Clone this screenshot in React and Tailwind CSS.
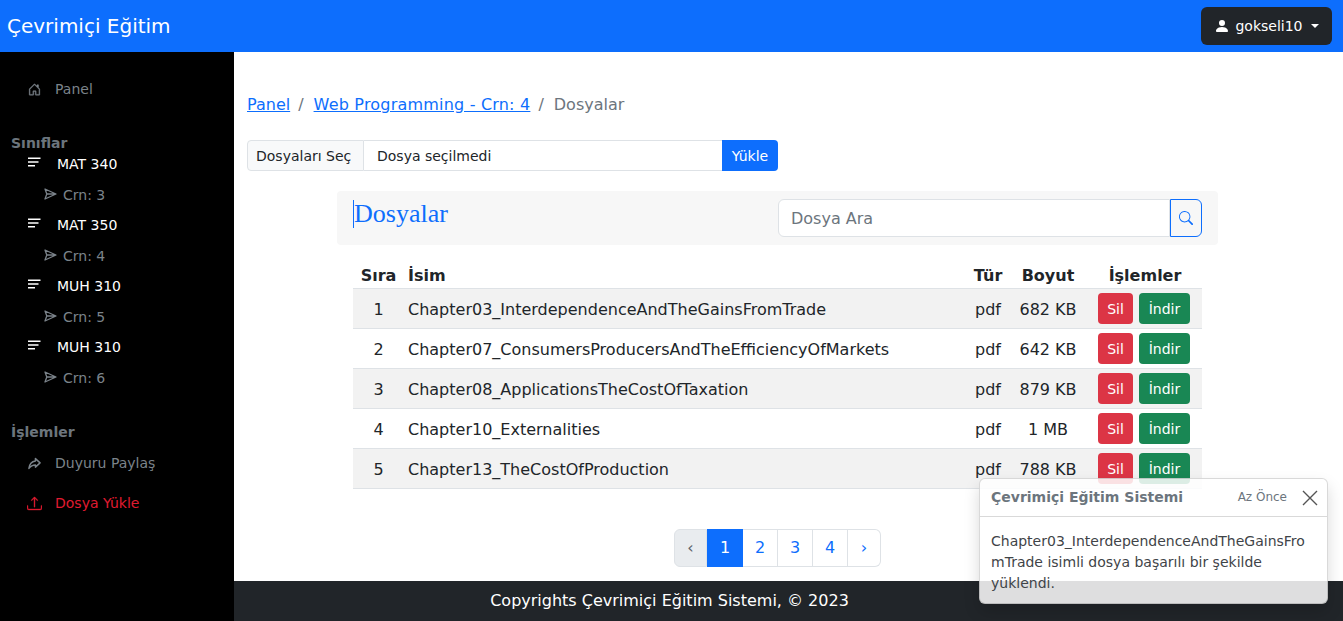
import React from "react";
import { BsHouseDoor, BsSearch, BsUpload, BsPersonFill } from "react-icons/bs";

const rows = [
  ["1", "Chapter03_InterdependenceAndTheGainsFromTrade", "682 KB"],
  ["2", "Chapter07_ConsumersProducersAndTheEfficiencyOfMarkets", "642 KB"],
  ["3", "Chapter08_ApplicationsTheCostOfTaxation", "879 KB"],
  ["4", "Chapter10_Externalities", "1 MB"],
  ["5", "Chapter13_TheCostOfProduction", "788 KB"],
];
const classes = [["MAT 340", "Crn: 3"], ["MAT 350", "Crn: 4"], ["MUH 310", "Crn: 5"], ["MUH 310", "Crn: 6"]];
const bold = "font-['DejaVu_Sans'] font-bold";

function Course({ name, crn }) {
  return (
    <div>
      <div className="flex h-[31px] items-center pl-[28px] text-[14px] text-white">
        <svg className="-mt-[3px] h-[12px] w-[13px]" viewBox="0 0 13 12" fill="none" stroke="currentColor" strokeWidth="1.5">
          <path d="M0 2.2h12.5M0 6h10.5M0 9.8h7" />
        </svg>
        <span className="ml-[16px] pt-[2px]">{name}</span>
      </div>
      <div className="flex h-[30px] items-center pl-[44px] text-[14px] text-[#7b838a]">
        <svg className="h-[12px] w-[13px]" viewBox="0 0 13 12" fill="none" stroke="currentColor" strokeWidth="1.3" strokeLinejoin="round">
          <path d="M1 1l11 5L1 11l1.8-5zM2.8 6H12" />
        </svg>
        <span className="ml-[6px] pt-[2px]">{crn}</span>
      </div>
    </div>
  );
}

export default function App() {
  return (
    <div className="relative h-[621px] w-[1343px] overflow-hidden bg-white font-['DejaVu_Sans',sans-serif] text-[16px] text-[#212529]">
      <header className="flex h-[52px] items-center justify-between bg-[#0d6efd] pl-[7px] pr-[11px]">
        <span className="-mt-[1px] text-[20px] text-white">Çevrimiçi Eğitim</span>
        <button className="flex h-[38px] w-[131px] items-center justify-center rounded-[6px] bg-[#212529] text-[14px] text-white">
          <BsPersonFill className="mr-[5px] h-[16px] w-[16px]" />
          gokseli10
          <span className="ml-[8px] h-0 w-0 border-x-[4px] border-t-[4px] border-x-transparent border-t-white" />
        </button>
      </header>
      <div className="flex h-[569px]">
        <aside className="w-[234px] shrink-0 bg-black pt-[16px]">
          <div className="flex h-[42px] items-center pl-[28px] text-[14px] text-[#7b838a]">
            <BsHouseDoor className="h-[13px] w-[13px]" stroke="currentColor" strokeWidth="0.5" />
            <span className="ml-[14px]">Panel</span>
          </div>
          <div className={`mt-[23px] pl-[11px] text-[14px] leading-[20px] text-[#6c757d] ${bold}`}>Sınıflar</div>
          <div className="-mt-[5px]">
            {classes.map(([n, c], i) => <Course key={i} name={n} crn={c} />)}
          </div>
          <div className={`mt-[30px] pl-[11px] text-[14px] leading-[20px] text-[#6c757d] ${bold}`}>İşlemler</div>
          <div className="mt-[1px] flex h-[40px] items-center pl-[28px] text-[14px] text-[#7b838a]">
            <svg className="h-[13px] w-[13px]" viewBox="0 0 14 13" fill="none" stroke="currentColor" strokeWidth="1.6" strokeLinejoin="round">
              <path d="M8 1.2l5 4.6-5 4.6V8C5 8 3 9 1 11.8 1.5 7.5 4 4.4 8 3.8z" />
            </svg>
            <span className="ml-[14px]">Duyuru Paylaş</span>
          </div>
          <div className="flex h-[40px] items-center pl-[27px] text-[14px] text-[#e01b30]">
            <BsUpload className="h-[15px] w-[15px]" stroke="currentColor" strokeWidth="0.4" />
            <span className="ml-[13px]">Dosya Yükle</span>
          </div>
        </aside>
        <main className="flex min-w-0 flex-1 flex-col">
          <div className="flex-1 px-[13px]">
            <nav className="mt-[41px] flex h-[24px] items-center text-[#6c757d]">
              <a className="text-[#0d6efd] underline">Panel</a>
              <span className="pl-[8px] pr-[10px]">/</span>
              <a className="text-[#0d6efd] underline tracking-[0.2px]">Web Programming - Crn: 4</a>
              <span className="pl-[8px] pr-[10px]">/</span>
              <span>Dosyalar</span>
            </nav>
            <div className="mt-[23px] flex h-[31px] w-[531px] text-[14px]">
              <div className="flex w-[117px] items-center rounded-l-[4px] border border-[#dee2e6] bg-[#f8f9fa] pl-[8px] pt-[2px]">Dosyaları Seç</div>
              <div className="flex flex-1 items-center border-y border-[#dee2e6] pl-[13px] pt-[2px]">Dosya seçilmedi</div>
              <button className="w-[56px] rounded-r-[4px] bg-[#0d6efd] pt-[1px] text-white">Yükle</button>
            </div>
            <div className="ml-[90px] mt-[20px] w-[881px]">
              <div className="flex h-[54px] items-center justify-between rounded-[4px] bg-[#f7f7f7] px-[16px]">
                <div className="-mt-[8px] border-l border-[#0d6efd] font-['Liberation_Serif',serif] text-[26px] leading-[28px] text-[#0d6efd]">Dosyalar</div>
                <div className="flex h-[38px] w-[424px]">
                  <div className="flex flex-1 items-center rounded-l-[6px] border border-[#dee2e6] bg-white pl-[12px] pt-[2px] text-[#6c757d]">Dosya Ara</div>
                  <button className="flex w-[32px] items-center justify-center rounded-r-[6px] border border-[#0d6efd] text-[#0d6efd]">
                    <BsSearch className="h-[14px] w-[14px]" />
                  </button>
                </div>
              </div>
              <table className="ml-[16px] mt-[16px] w-[849px] border-collapse">
                <thead>
                  <tr className={`h-[27px] border-b border-[#dee2e6] text-[16px] leading-[20px] ${bold}`}>
                    <th className="w-[51px] pt-[4px] font-bold">Sıra</th>
                    <th className="pl-[4px] pt-[4px] text-left font-bold">İsim</th>
                    <th className="w-[40px] pt-[4px] font-bold">Tür</th>
                    <th className="w-[80px] pt-[4px] font-bold">Boyut</th>
                    <th className="w-[114px] pt-[4px] font-bold">İşlemler</th>
                  </tr>
                </thead>
                <tbody>
                  {rows.map(([n, name, size], i) => (
                    <tr key={n} className={`h-[40px] border-b border-[#dee2e6] ${i % 2 === 0 ? "bg-[#f2f2f2]" : ""}`}>
                      <td className="pt-[4px] text-center">{n}</td>
                      <td className="pl-[4px] pt-[4px]">{name}</td>
                      <td className="pt-[4px] text-center">pdf</td>
                      <td className="pt-[4px] text-center">{size}</td>
                      <td>
                        <div className="flex justify-end gap-[6px] pr-[12px]">
                          <button className="h-[31px] w-[35px] rounded-[4px] bg-[#dc3545] pt-[2px] text-[14px] text-white">Sil</button>
                          <button className="h-[31px] w-[51px] rounded-[4px] bg-[#198754] pt-[2px] text-[14px] text-white">İndir</button>
                        </div>
                      </td>
                    </tr>
                  ))}
                </tbody>
              </table>
              <div className="mt-[40px] flex justify-center">
                <div className="flex h-[38px] text-[#0d6efd]">
                  <span className="flex w-[33px] items-center justify-center rounded-l-[6px] border border-[#dee2e6] bg-[#e9ecef] text-[#5c636a]">‹</span>
                  <span className="flex w-[36px] items-center justify-center bg-[#0d6efd] text-white">1</span>
                  <span className="flex w-[35px] items-center justify-center border-y border-r border-[#dee2e6]">2</span>
                  <span className="flex w-[35px] items-center justify-center border-y border-r border-[#dee2e6]">3</span>
                  <span className="flex w-[35px] items-center justify-center border-y border-r border-[#dee2e6]">4</span>
                  <span className="flex w-[33px] items-center justify-center rounded-r-[6px] border-y border-r border-[#dee2e6]">›</span>
                </div>
              </div>
            </div>
          </div>
          <footer className="flex h-[40px] items-center justify-center bg-[#212529] pr-[238px] text-white">Copyrights Çevrimiçi Eğitim Sistemi, © 2023</footer>
        </main>
      </div>
      <div className="absolute left-[979px] top-[478px] w-[349px] rounded-[6px] border border-[#00000026] bg-[#ffffffd9] text-[14px] shadow-[0_8px_16px_rgba(0,0,0,0.15)]">
        <div className="flex h-[38px] items-center border-b border-[#00000026] pl-[11px] pr-[9px] text-[#6c757d]">
          <strong className={`flex-1 text-[14px] ${bold}`}>Çevrimiçi Eğitim Sistemi</strong>
          <small className="-mt-[1px] text-[12px]">Az Önce</small>
          <svg className="ml-[15px] h-[16px] w-[16px]" viewBox="0 0 16 16" fill="none" stroke="#555" strokeWidth="1.4"><path d="M1 1l14 14M15 1L1 15" /></svg>
        </div>
        <div className="wrap-anywhere pb-[9px] pl-[11px] pr-[19px] pt-[14px] leading-[21px] text-[#3f4448]">
          Chapter03_InterdependenceAndTheGainsFromTrade isimli dosya başarılı bir şekilde yüklendi.
        </div>
      </div>
    </div>
  );
}
